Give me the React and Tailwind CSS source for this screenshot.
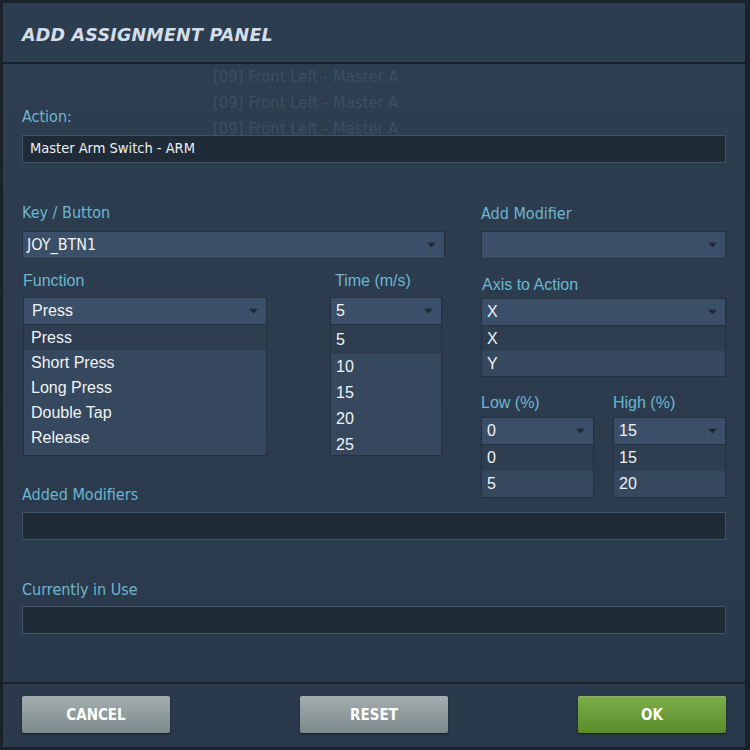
import React from 'react';

const condensed = { fontFamily: '"DejaVu Sans Condensed", "DejaVu Sans", sans-serif', fontStretch: 'condensed' };
const arial = { fontFamily: '"Liberation Sans", Arial, sans-serif' };

function Arrow() {
  return (
    <svg width="9" height="5" viewBox="0 0 9 5" className="absolute right-[8px] top-1/2 -translate-y-1/2">
      <path d="M0 0 H9 L4.5 5 Z" fill="#1d2834" />
    </svg>
  );
}

function Select({ value, pl = 'pl-[5px]', font = arial, size = 'text-[16px]' }) {
  return (
    <div
      className={`relative h-[28px] bg-[#3b4f68] border border-[#223040] flex items-center ${pl} ${size} text-[#f1f3f5]`}
      style={font}
    >
      {value}
      <Arrow />
    </div>
  );
}

function OptionList({ items, pl = 'pl-[5px]', rowH = 'h-[25px]', extra = '' }) {
  return (
    <div className={`bg-[#35485e] border border-[#223040] border-t-0 ${extra}`} style={arial}>
      {items.map((it, i) => (
        <div
          key={it + i}
          className={`${rowH} flex items-center ${pl} text-[16px] text-[#f1f3f5] ${i === 0 ? 'bg-[#2e3d50]' : ''}`}
        >
          {it}
        </div>
      ))}
    </div>
  );
}

function Label({ children, font = condensed, className = 'text-[16px]' }) {
  return (
    <div className={`h-[18px] leading-[18px] text-[#6db6cf] ${className}`} style={font}>
      {children}
    </div>
  );
}

function DarkInput({ children }) {
  return (
    <div
      className="h-[28px] bg-[#202b38] border border-[#415367] flex items-center pl-[7px] text-[14.5px] text-[#eef1f4]"
      style={condensed}
    >
      {children}
    </div>
  );
}

function Button({ children, green }) {
  return (
    <button
      className={`w-[148px] h-[37px] rounded-[2px] border-t border-white/30 text-white text-[15px] font-bold shadow-[0_1px_2px_rgba(0,0,0,0.5)] ${
        green
          ? 'bg-gradient-to-b from-[#7cad48] to-[#5a8c2b]'
          : 'bg-gradient-to-b from-[#a3adae] to-[#7c888a]'
      }`}
      style={condensed}
    >
      {children}
    </button>
  );
}

export default function App() {
  return (
    <div className="w-[750px] h-[750px] bg-[#19212b] pt-[3px] pl-[3px] pr-[5px] pb-[3px] flex">
      <div className="flex-1 flex flex-col bg-gradient-to-b from-[#2e3e51] to-[#2a394b]">
        {/* Header */}
        <div className="h-[61px] flex items-center pl-[19px] border-b-2 border-[#19222c] bg-[#2d3d50]">
          <h1
            className="text-[17.5px] font-bold italic text-[#d3dee8] tracking-[0.2px] pt-[5px]"
            style={{ fontFamily: '"DejaVu Sans", Verdana, sans-serif' }}
          >
            ADD ASSIGNMENT PANEL
          </h1>
        </div>

        {/* Body */}
        <div className="flex-1 relative px-[19px]">
          <div
            className="absolute left-[210px] top-0 text-[16.5px] leading-[26px] text-[#3d4e62] pointer-events-none"
            style={condensed}
          >
            <div>[09] Front Left - Master A</div>
            <div>[09] Front Left - Master A</div>
            <div>[09] Front Left - Master A</div>
          </div>

          <Label className="mt-[44px] relative text-[16px]">Action:</Label>
          <div className="mt-[9px] relative">
            <DarkInput>Master Arm Switch - ARM</DarkInput>
          </div>

          <div className="flex gap-[36px] mt-[41px]">
            {/* Left column */}
            <div className="w-[423px] flex flex-col">
              <Label>Key / Button</Label>
              <div className="mt-[9px]">
                <Select value="JOY_BTN1" pl="pl-[4px]" font={condensed} size="text-[16px]" />
              </div>
              <div className="flex mt-[13px]">
                <div className="w-[244px] ml-[1px]">
                  <Label font={arial} className="text-[16px]">Function</Label>
                  <div className="mt-[7px]">
                    <Select value="Press" pl="pl-[8px]" />
                  </div>
                  <OptionList
                    items={['Press', 'Short Press', 'Long Press', 'Double Tap', 'Release']}
                    pl="pl-[7px]"
                    extra="h-[131px]"
                  />
                </div>
                <div className="w-[112px] ml-[63px]">
                  <Label font={arial} className="text-[16px] pl-[5px]">Time (m/s)</Label>
                  <div className="mt-[7px]">
                    <Select value="5" />
                  </div>
                  <div className="h-[131px] bg-[#35485e] border border-[#223040] border-t-0" style={arial}>
                    {['5', '10', '15', '20', '25'].map((v, i) => (
                      <div
                        key={v}
                        className={`${i === 0 ? 'h-[29px] bg-[#2e3d50]' : 'h-[26px]'} flex items-center pl-[5px] text-[16px] text-[#f1f3f5]`}
                      >
                        {v}
                      </div>
                    ))}
                  </div>
                </div>
              </div>
              <Label className="mt-[30px] text-[16px]">Added Modifiers</Label>
            </div>

            {/* Right column */}
            <div className="w-[245px] flex flex-col">
              <Label className="mt-[1px] text-[16px]">Add Modifier</Label>
              <div className="mt-[8px]">
                <Select value="" />
              </div>
              <Label font={arial} className="text-[16px] mt-[17px] pl-[1px]">Axis to Action</Label>
              <div className="mt-[4px]">
                <Select value="X" />
              </div>
              <OptionList items={['X', 'Y']} />
              <div className="flex gap-[19px] mt-[17px]">
                <div className="w-[113px]">
                  <Label font={arial} className="text-[16px]">Low (%)</Label>
                  <div className="mt-[5px]">
                    <Select value="0" />
                  </div>
                  <OptionList items={['0', '5']} rowH="h-[26px]" />
                </div>
                <div className="w-[113px]">
                  <Label font={arial} className="text-[16px]">High (%)</Label>
                  <div className="mt-[5px]">
                    <Select value="15" />
                  </div>
                  <OptionList items={['15', '20']} rowH="h-[26px]" />
                </div>
              </div>
            </div>
          </div>

          <div className="mt-[8px]">
            <DarkInput />
          </div>

          <Label className="mt-[41px] text-[16px]">Currently in Use</Label>
          <div className="mt-[7px]">
            <DarkInput />
          </div>
        </div>

        {/* Footer */}
        <div className="h-[65px] border-t-2 border-[#19222c] flex items-start justify-between px-[19px] pt-[12px]">
          <Button>CANCEL</Button>
          <Button>RESET</Button>
          <Button green>OK</Button>
        </div>
      </div>
    </div>
  );
}
